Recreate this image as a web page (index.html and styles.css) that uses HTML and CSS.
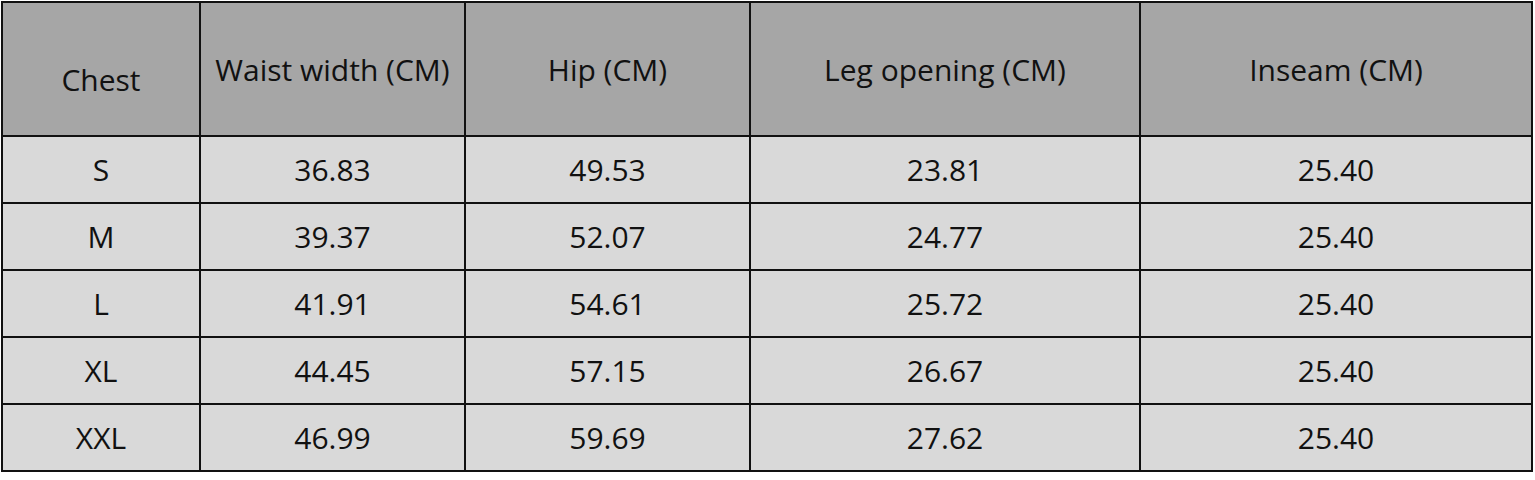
FILE: index.html
```html
<!DOCTYPE html>
<html>
<head>
<meta charset="utf-8">
<link rel="stylesheet" href="styles.css">
</head>
<body>
<div class="wrap">
  <div class="sheet">
    <div class="cell head head-first">Chest</div>
    <div class="cell head">Waist width (CM)</div>
    <div class="cell head">Hip (CM)</div>
    <div class="cell head">Leg opening (CM)</div>
    <div class="cell head">Inseam (CM)</div>

    <div class="cell">S</div><div class="cell">36.83</div><div class="cell">49.53</div><div class="cell">23.81</div><div class="cell">25.40</div>
    <div class="cell">M</div><div class="cell">39.37</div><div class="cell">52.07</div><div class="cell">24.77</div><div class="cell">25.40</div>
    <div class="cell">L</div><div class="cell">41.91</div><div class="cell">54.61</div><div class="cell">25.72</div><div class="cell">25.40</div>
    <div class="cell">XL</div><div class="cell">44.45</div><div class="cell">57.15</div><div class="cell">26.67</div><div class="cell">25.40</div>
    <div class="cell">XXL</div><div class="cell">46.99</div><div class="cell">59.69</div><div class="cell">27.62</div><div class="cell">25.40</div>
  </div>
</div>
</body>
</html>
```

FILE: styles.css
```css
html, body {
  margin: 0;
  padding: 0;
  background: #ffffff;
}
.wrap {
  padding: 1px 0 0 1px;
}
.sheet {
  display: grid;
  grid-template-columns: 196px 263px 283px 388px 390px;
  grid-template-rows: 132px 65px 65px 65px 65px 65px;
  gap: 2px;
  padding: 2px;
  width: max-content;
  background: #111111;
  font-family: "Open Sans", "Noto Sans", sans-serif;
  font-size: 30px;
  color: #111111;
}
.cell {
  background: #d9d9d9;
  display: flex;
  align-items: center;
  justify-content: center;
}
.head {
  background: #a6a6a6;
}
.head-first {
  padding-top: 20px;
}
```
